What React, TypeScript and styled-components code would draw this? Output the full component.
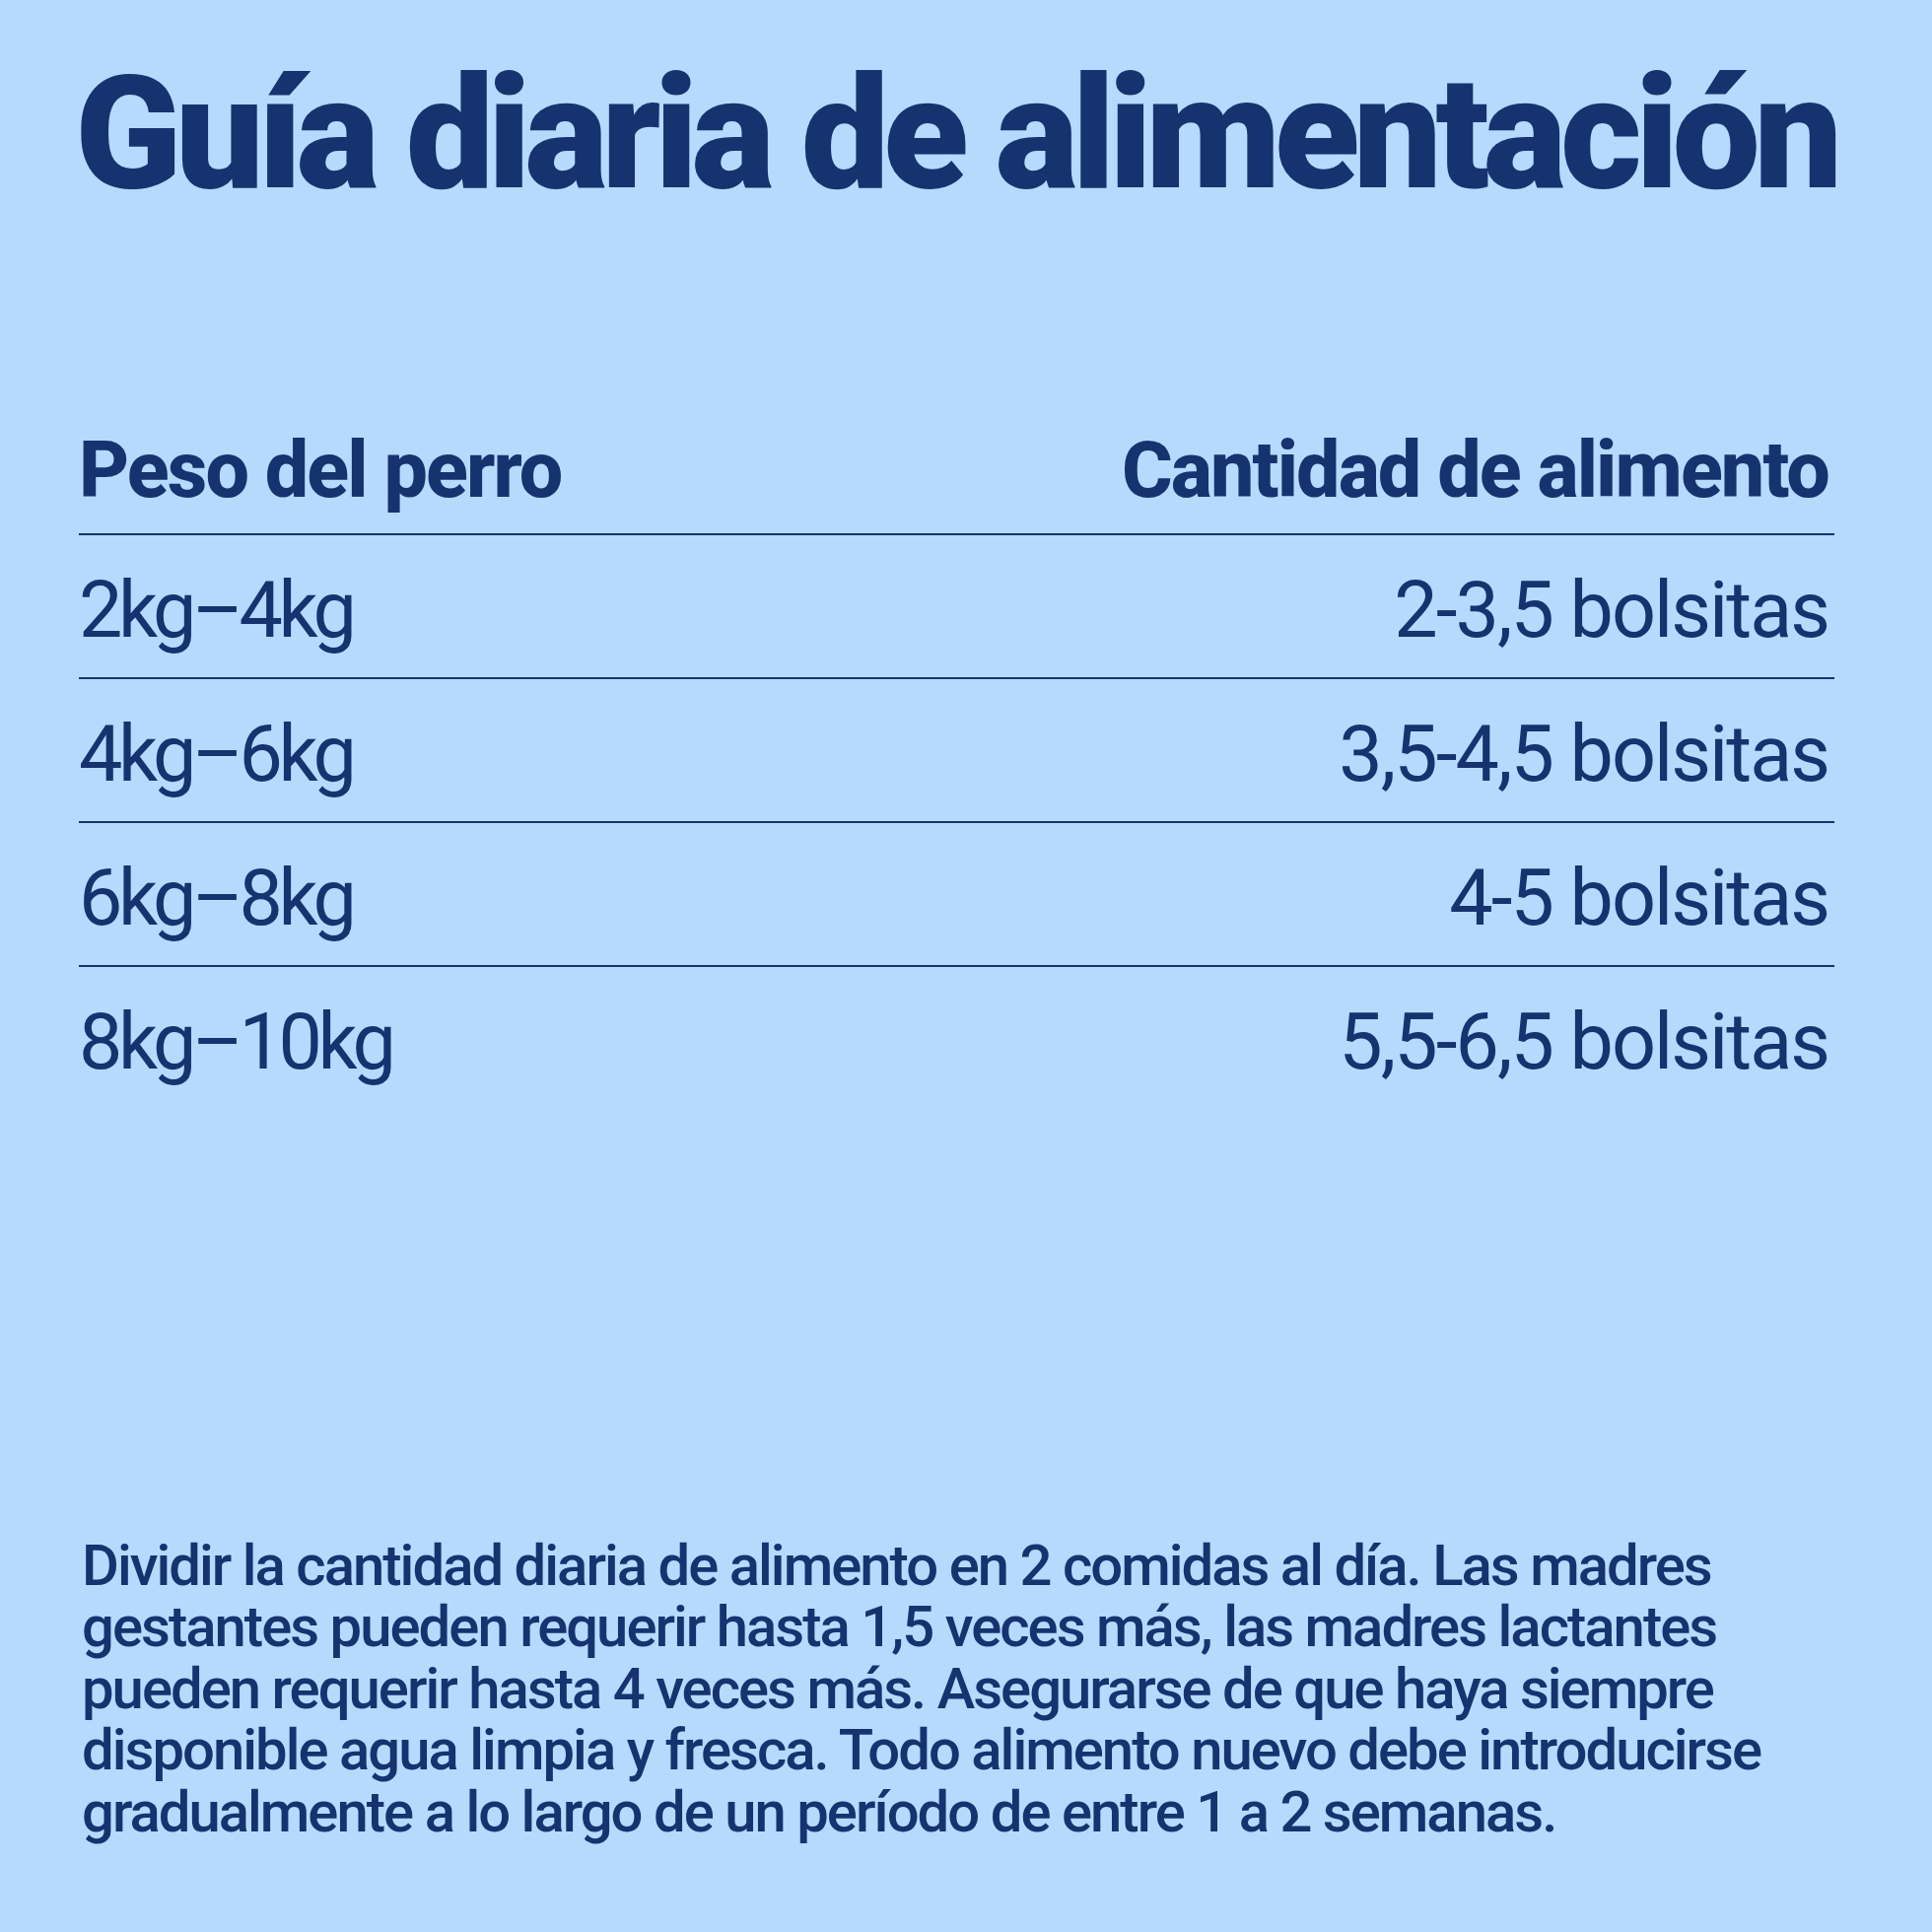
import styled, { createGlobalStyle } from 'styled-components'

const navy = '#15336f'

const Global = createGlobalStyle`
  html, body { margin: 0; padding: 0; }
  body {
    background: #b5dafd;
    color: ${navy};
    font-family: Roboto, "Liberation Sans", sans-serif;
  }
`

const Page = styled.main`
  box-sizing: border-box;
  width: 1960px;
  height: 1960px;
  padding: 56px 99px 91px 80px;
  display: flex;
  flex-direction: column;
`

const Title = styled.h1`
  margin: 0 0 0 -4px;
  font-size: 159px;
  line-height: 159px;
  font-weight: 900;
  letter-spacing: -0.04em;
  white-space: nowrap;
`

const Table = styled.div`
  margin-top: 223px;
  display: flex;
  flex-direction: column;
`

const Row = styled.div<{ $head?: boolean }>`
  display: flex;
  justify-content: space-between;
  align-items: baseline;
  padding: ${({ $head }) => ($head ? '0 6px 24px 0' : '37px 6px 28px 0')};
  font-size: 79px;
  line-height: 79px;
  font-weight: ${({ $head }) => ($head ? 800 : 400)};
  border-bottom: 2px solid ${navy};

  &:last-child {
    border-bottom: none;
  }
`

// left column (weights) sets a touch tighter than the amounts
const Cell = styled.span<{ $head?: boolean; $tight?: boolean }>`
  letter-spacing: ${({ $head, $tight }) => ($head ? '-0.024em' : $tight ? '-0.055em' : '-0.025em')};
`

const Note = styled.p`
  margin: auto 0 0 3px;
  font-size: 58px;
  line-height: 62.5px;
  font-weight: 500;
  letter-spacing: -0.034em;
  white-space: nowrap;
`

const rows = [
  ['2kg–4kg', '2-3,5 bolsitas'],
  ['4kg–6kg', '3,5-4,5 bolsitas'],
  ['6kg–8kg', '4-5 bolsitas'],
  ['8kg–10kg', '5,5-6,5 bolsitas'],
]

export default function App() {
  return (
    <>
      <Global />
      <Page>
        <Title>Guía diaria de alimentación</Title>

        <Table>
          <Row $head>
            <Cell $head>Peso del perro</Cell>
            <Cell $head>Cantidad de alimento</Cell>
          </Row>
          {rows.map(([weight, amount]) => (
            <Row key={weight}>
              <Cell $tight>{weight}</Cell>
              <Cell>{amount}</Cell>
            </Row>
          ))}
        </Table>

        <Note>
          Dividir la cantidad diaria de alimento en 2 comidas al día. Las madres
          <br />
          gestantes pueden requerir hasta 1,5 veces más, las madres lactantes
          <br />
          pueden requerir hasta 4 veces más. Asegurarse de que haya siempre
          <br />
          disponible agua limpia y fresca. Todo alimento nuevo debe introducirse
          <br />
          gradualmente a lo largo de un período de entre 1 a 2 semanas.
        </Note>
      </Page>
    </>
  )
}
